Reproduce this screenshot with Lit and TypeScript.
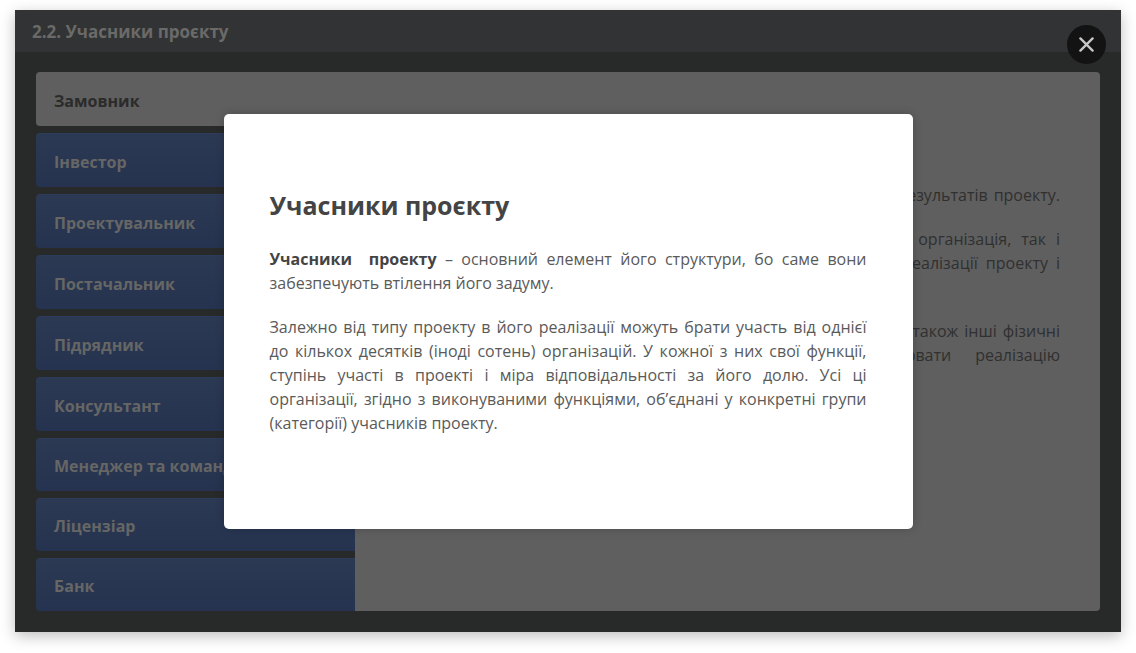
import { LitElement, html, css } from "lit";
import { customElement, state } from "lit/decorators.js";

const PARTICIPANTS = [
  "Замовник",
  "Інвестор",
  "Проектувальник",
  "Постачальник",
  "Підрядник",
  "Консультант",
  "Менеджер та команда",
  "Ліцензіар",
  "Банк",
];

@customElement("app-root")
export class AppRoot extends LitElement {
  static styles = css`
    :host {
      display: flex;
      box-sizing: border-box;
      min-height: 100vh;
      padding: 10px 15px 21px;
      background: #fff;
      font-family: "Open Sans", "Noto Sans", sans-serif;
      font-size: 16px;
      line-height: 24px;
    }
    .slide {
      position: relative;
      flex: 1;
      display: flex;
      flex-direction: column;
      background: #282929;
      box-shadow: 0 4px 14px rgba(0, 0, 0, 0.26);
    }
    .bar {
      padding: 10px 17px 8px;
      background: #323334;
    }
    .bar-title {
      margin: 0;
      font-size: 17px;
      line-height: 24px;
      font-weight: 700;
      color: #6a6a69;
    }
    .body {
      flex: 1;
      display: grid;
      grid-template-columns: 30% 1fr;
      margin: 20px 21px 21px;
    }
    .tabs {
      display: grid;
      grid-template-rows: repeat(6, 54fr) repeat(3, 53fr);
      row-gap: 7px;
    }
    .tab {
      padding: 2px 18px 0;
      border: 0;
      border-top: 1px solid #2d3c5b;
      border-radius: 4px 0 0 4px;
      background: linear-gradient(#2c3953, #253350);
      color: #666665;
      font: inherit;
      font-weight: 700;
      text-align: left;
    }
    .tab.active {
      border-color: #5f5f5f;
      background: #5f5f5f;
      color: #2b2b2b;
    }
    .panel {
      display: flex;
      flex-direction: column;
      gap: 20px;
      padding: 111px 40px 40px;
      border-radius: 0 4px 4px 0;
      background: #5f5f5f;
      color: #303030;
    }
    .passage {
      margin: 0;
    }
    .passage.long {
      min-height: 72px;
    }
    .line {
      display: flex;
      justify-content: flex-end;
      column-gap: 6px;
    }
    .line.medium {
      column-gap: 8px;
    }
    .line.loose {
      column-gap: 10px;
    }
    .line.wide {
      column-gap: 24px;
    }
    .overlay {
      position: absolute;
      inset: 0;
      display: grid;
      place-items: center;
    }
    .dialog {
      box-sizing: border-box;
      width: 100%;
      max-width: 689px;
      padding: 72px 46px 94px;
      border-radius: 5px;
      background: #fff;
      box-shadow: 0 0 10px rgba(0, 0, 0, 0.2);
      color: #5a5a5a;
    }
    .dialog-title {
      margin: 0 0 23px;
      font-size: 25px;
      line-height: 38px;
      font-weight: 700;
      color: #444;
    }
    .text {
      margin: 0 0 20px;
      text-align: justify;
    }
    .text:last-child {
      margin-bottom: 0;
    }
    .term {
      color: #444;
    }
    .close {
      position: absolute;
      top: 15px;
      right: 15px;
      display: grid;
      place-items: center;
      width: 39px;
      height: 39px;
      padding: 0;
      border: 0;
      border-radius: 50%;
      background: #131313;
      color: #c8c8c8;
    }
  `;

  @state() private active = 0;
  @state() private open = true;

  private line(words: string[], spacing = "") {
    return html`<span class="line ${spacing}">${words.map((w) => html`<span>${w}</span>`)}</span>`;
  }

  render() {
    return html`
      <main class="slide">
        <header class="bar"><h1 class="bar-title">2.2. Учасники проєкту</h1></header>
        <div class="body">
          <nav class="tabs" role="tablist">
            ${PARTICIPANTS.map(
              (name, i) => html`<button
                class="tab ${i === this.active ? "active" : ""}"
                role="tab"
                aria-selected=${i === this.active}
                @click=${() => (this.active = i)}
              >${name}</button>`
            )}
          </nav>
          <section class="panel" role="tabpanel">
            <p class="passage">${this.line(["результатів", "проекту."])}</p>
            <p class="passage long">
              ${this.line(["організація,", "так", "і"], "loose")}
              ${this.line(["реалізації", "проекту", "і"], "medium")}
            </p>
            <p class="passage">
              ${this.line(["також", "інші", "фізичні"])}
              ${this.line(["здійснювати", "реалізацію"], "wide")}
            </p>
          </section>
        </div>
        ${this.open
          ? html`<div class="overlay">
              <article class="dialog" role="dialog" aria-labelledby="dialog-title">
                <h2 class="dialog-title" id="dialog-title">Учасники проєкту</h2>
                <p class="text"><strong class="term">Учасники&nbsp; проекту</strong> – основний елемент його структури, бо саме вони забезпечують втілення його задуму.</p>
                <p class="text">Залежно від типу проекту в його реалізації можуть брати участь від однієї до кількох десятків (іноді сотень) організацій. У кожної з них свої функції, ступінь участі в проекті і міра відповідальності за його долю. Усі ці організації, згідно з виконуваними функціями, об’єднані у конкретні групи (категорії) учасників проекту.</p>
              </article>
              <button class="close" aria-label="Закрити" @click=${() => (this.open = false)}>
                <svg width="15" height="15" viewBox="0 0 15 15" fill="none" stroke="currentColor" stroke-width="2.3" stroke-linecap="round">
                  <path d="M1.4 1.4 13.6 13.6M13.6 1.4 1.4 13.6" />
                </svg>
              </button>
            </div>`
          : ""}
      </main>
    `;
  }
}
